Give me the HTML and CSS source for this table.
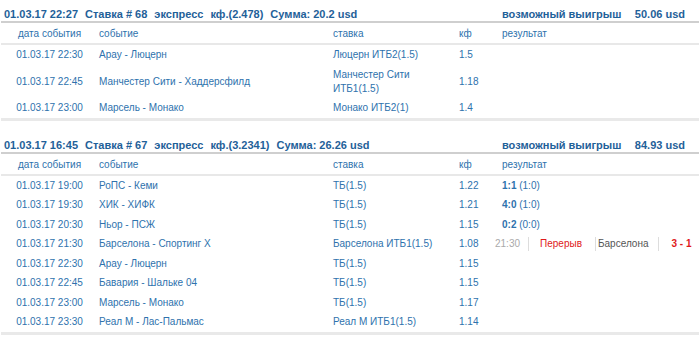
FILE: index.html
```html
<!DOCTYPE html>
<html lang="ru">
<head>
<meta charset="utf-8">
<link rel="stylesheet" href="styles.css">
</head>
<body>
<div class="page">
  <section class="bet">
    <div class="bet-head">
      <div class="bet-info">
        <span>01.03.17 22:27</span><span>Ставка # 68</span><span>экспресс</span><span>кф.(2.478)</span><span>Сумма: 20.2 usd</span>
      </div>
      <div class="bet-win"><span>возможный выигрыш</span><span>50.06 usd</span></div>
    </div>
    <table class="events">
      <colgroup><col class="c-date"><col class="c-event"><col class="c-bet"><col class="c-kf"><col></colgroup>
      <thead><tr><th class="date">дата события</th><th>событие</th><th>ставка</th><th>кф</th><th class="res">результат</th></tr></thead>
      <tbody>
        <tr><td class="date">01.03.17 22:30</td><td>Арау - Люцерн</td><td>Люцерн ИТБ2(1.5)</td><td>1.5</td><td class="res"></td></tr>
        <tr><td class="date">01.03.17 22:45</td><td>Манчестер Сити - Хаддерсфилд</td><td>Манчестер Сити ИТБ1(1.5)</td><td>1.18</td><td class="res"></td></tr>
        <tr><td class="date">01.03.17 23:00</td><td>Марсель - Монако</td><td>Монако ИТБ2(1)</td><td>1.4</td><td class="res"></td></tr>
      </tbody>
    </table>
  </section>

  <section class="bet">
    <div class="bet-head">
      <div class="bet-info">
        <span>01.03.17 16:45</span><span>Ставка # 67</span><span>экспресс</span><span>кф.(3.2341)</span><span>Сумма: 26.26 usd</span>
      </div>
      <div class="bet-win"><span>возможный выигрыш</span><span>84.93 usd</span></div>
    </div>
    <table class="events">
      <colgroup><col class="c-date"><col class="c-event"><col class="c-bet"><col class="c-kf"><col></colgroup>
      <thead><tr><th class="date">дата события</th><th>событие</th><th>ставка</th><th>кф</th><th class="res">результат</th></tr></thead>
      <tbody>
        <tr><td class="date">01.03.17 19:00</td><td>РоПС - Кеми</td><td>ТБ(1.5)</td><td>1.22</td><td class="res"><b>1:1</b> (1:0)</td></tr>
        <tr><td class="date">01.03.17 19:30</td><td>ХИК - ХИФК</td><td>ТБ(1.5)</td><td>1.21</td><td class="res"><b>4:0</b> (1:0)</td></tr>
        <tr><td class="date">01.03.17 20:30</td><td>Ньор - ПСЖ</td><td>ТБ(1.5)</td><td>1.15</td><td class="res"><b>0:2</b> (0:0)</td></tr>
        <tr><td class="date">01.03.17 21:30</td><td>Барселона - Спортинг Х</td><td>Барселона ИТБ1(1.5)</td><td>1.08</td>
          <td class="res live"><div class="live-row"><span class="l-time">21:30</span><span class="l-state">Перерыв</span><span class="l-team">Барселона</span><span class="l-score">3 - 1</span></div></td></tr>
        <tr><td class="date">01.03.17 22:30</td><td>Арау - Люцерн</td><td>ТБ(1.5)</td><td>1.15</td><td class="res"></td></tr>
        <tr><td class="date">01.03.17 22:45</td><td>Бавария - Шальке 04</td><td>ТБ(1.5)</td><td>1.15</td><td class="res"></td></tr>
        <tr><td class="date">01.03.17 23:00</td><td>Марсель - Монако</td><td>ТБ(1.5)</td><td>1.17</td><td class="res"></td></tr>
        <tr><td class="date">01.03.17 23:30</td><td>Реал М - Лас-Пальмас</td><td>Реал М ИТБ1(1.5)</td><td>1.14</td><td class="res"></td></tr>
      </tbody>
    </table>
  </section>
</div>
</body>
</html>
```
FILE: styles.css
```css
html, body {
  margin: 0;
  padding: 0;
  background: #fff;
}
.page {
  width: 698px;
  padding-left: 1px;
  font-family: "Liberation Sans", Arial, sans-serif;
  font-size: 10px;
  color: #2e72ad;
}
.bet + .bet {
  margin-top: 10px;
}
.bet-head {
  display: grid;
  grid-template-columns: 501px 1fr;
  height: 23px;
  border-bottom: 2px solid #cfcfcf;
  font-weight: bold;
  font-size: 11px;
  color: #1f6199;
  line-height: 16px;
  padding-top: 6px;
  box-sizing: border-box;
}
.bet-info {
  display: flex;
  padding-left: 3px;
  white-space: nowrap;
}
.bet-info span {
  margin-right: 7px;
}
.bet-win {
  display: flex;
  justify-content: space-between;
  padding-right: 14px;
  white-space: nowrap;
}
.events {
  width: 100%;
  border-collapse: collapse;
  table-layout: fixed;
}
.c-date { width: 97px; }
.c-event { width: 235px; }
.c-bet { width: 126px; }
.c-kf { width: 36px; }
.events th {
  font-weight: normal;
  text-align: left;
  height: 18px;
  line-height: 14px;
  padding: 2px 0 0;
  border-bottom: 2px solid #e8e8e8;
  vertical-align: middle;
}
.events td {
  text-align: left;
  line-height: 14px;
  padding: 3px 12px 2.5px 0;
  vertical-align: middle;
}
.events th:first-child, .events td:first-child {
  padding-left: 0;
  padding-right: 0;
}
.events .date {
  text-align: center;
}
.events td:nth-child(2), .events th:nth-child(2) {
  padding-left: 1px;
}
.events .res {
  padding-left: 7px;
  padding-right: 0;
}
.events tbody tr:last-child td {
  border-bottom: 3px solid #e9e9e9;
}
.events b {
  font-weight: bold;
}
.events .live {
  padding-left: 0;
}
.live-row {
  display: flex;
  align-items: center;
  white-space: nowrap;
}
.live-row span {
  line-height: 14px;
}
.l-time {
  color: #aaaaaa;
  padding-right: 8px;
  border-right: 1px solid #dddddd;
}
.l-state {
  color: #e0191b;
  padding-left: 11px;
  padding-right: 13px;
  border-right: 1px solid #dddddd;
}
.l-team {
  color: #555555;
  padding-left: 2px;
  padding-right: 10px;
  border-right: 1px solid #dddddd;
}
.l-score {
  color: #e0191b;
  font-weight: bold;
  padding-left: 12px;
}
```
